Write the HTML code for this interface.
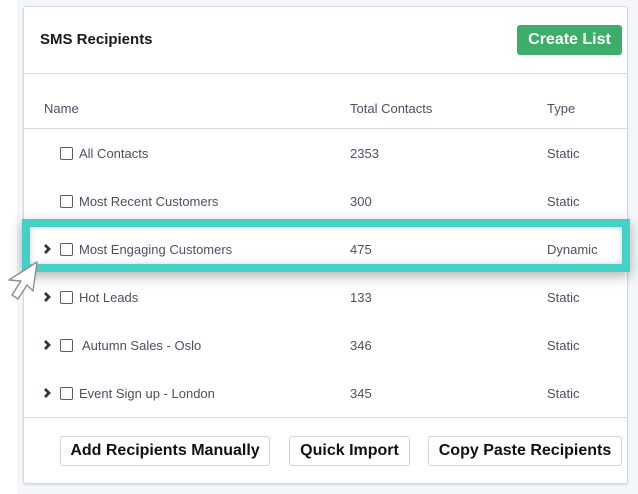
<!DOCTYPE html>
<html><head><style>
*{margin:0;padding:0;box-sizing:border-box}
body{width:638px;height:494px;background:#f4f7fa;font-family:"Liberation Sans",Arial,sans-serif;position:relative;overflow:hidden}
.lw{position:absolute;left:0;top:0;width:17px;height:494px;background:#fff}
.card{position:absolute;left:23px;top:6px;width:605px;height:478px;background:#fff;border:1px solid #d5d9de;border-radius:3px;box-shadow:0 1px 2px rgba(0,0,0,.12)}
.t{position:absolute;font-size:13px;color:#4a5160;white-space:nowrap}
.hl{position:absolute;left:22px;top:219px;width:608px;height:53px;border:8px solid #45d0c5;box-shadow:0 4px 12px rgba(0,0,0,.3), inset 0 0 6px rgba(0,0,0,.2)}
.cb{position:absolute;left:60px;width:13px;height:13px;border:1.3px solid #555c68;border-radius:2px;background:#fff}
.btn{position:absolute;top:436px;height:30px;border:1px solid #cfd3d8;border-radius:3px;background:#fff;font-weight:bold;font-size:16px;color:#111;text-align:center;line-height:28px}
.line{position:absolute;left:24px;width:604px;height:1px;background:#d5d9de}
</style></head><body>
<div class="lw"></div>
<div class="card"></div>
<div class="t" style="left:40px;top:31px;font-size:15px;font-weight:bold;color:#1a1a1a">SMS Recipients</div>
<div style="position:absolute;left:517px;top:25px;width:105px;height:30px;background:#3dae6a;border-radius:3px;color:#fff;font-weight:bold;font-size:16px;line-height:30px;text-align:center">Create List</div>
<div class="line" style="top:73px"></div>
<div class="line" style="top:128px"></div>
<div class="line" style="top:417px"></div>
<div class="t" style="left:44px;top:101px">Name</div>
<div class="t" style="left:350px;top:101px">Total Contacts</div>
<div class="t" style="left:547px;top:101px">Type</div>

<div class="cb" style="top:147px"></div><div class="t" style="left:79px;top:146px">All Contacts</div><div class="t" style="left:350px;top:146px">2353</div><div class="t" style="left:547px;top:146px">Static</div>
<div class="cb" style="top:195px"></div><div class="t" style="left:79px;top:194px">Most Recent Customers</div><div class="t" style="left:350px;top:194px">300</div><div class="t" style="left:547px;top:194px">Static</div>
<div class="hl"></div>
<div class="cb" style="top:243px"></div><div class="t" style="left:79px;top:242px">Most Engaging Customers</div><div class="t" style="left:350px;top:242px">475</div><div class="t" style="left:547px;top:242px">Dynamic</div>
<div class="cb" style="top:291px"></div><div class="t" style="left:79px;top:290px">Hot Leads</div><div class="t" style="left:350px;top:290px">133</div><div class="t" style="left:547px;top:290px">Static</div>
<div class="cb" style="top:339px"></div><div class="t" style="left:82px;top:338px">Autumn Sales - Oslo</div><div class="t" style="left:350px;top:338px">346</div><div class="t" style="left:547px;top:338px">Static</div>
<div class="cb" style="top:387px"></div><div class="t" style="left:79px;top:386px">Event Sign up - London</div><div class="t" style="left:350px;top:386px">345</div><div class="t" style="left:547px;top:386px">Static</div>

<svg width="638" height="494" style="position:absolute;left:0;top:0">
<g fill="none" stroke="#2f3744" stroke-width="2.8">
<path d="M45 245l4 4-4 4"/><path d="M45 293l4 4-4 4"/><path d="M45 341l4 4-4 4"/><path d="M45 389l4 4-4 4"/>
</g>
<polygon points="37,262 33,291 27,285 18,299 12,295 21,281 9,280" fill="#fff" stroke="#8a8f96" stroke-width="1.4" stroke-linejoin="round"/>
</svg>

<div class="btn" style="left:60px;width:210px">Add Recipients Manually</div>
<div class="btn" style="left:289px;width:121px">Quick Import</div>
<div class="btn" style="left:428px;width:194px">Copy Paste Recipients</div>
</body></html>
